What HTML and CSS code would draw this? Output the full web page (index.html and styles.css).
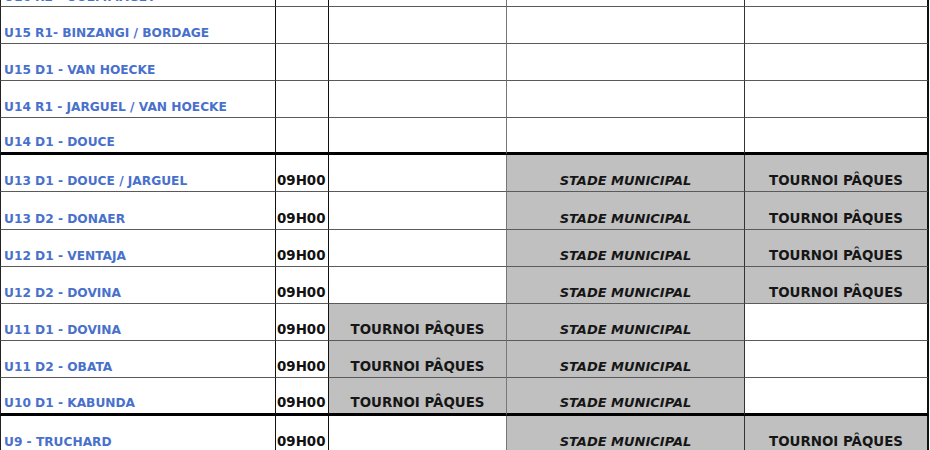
FILE: index.html
```html
<!DOCTYPE html>
<html lang="fr">
<head>
<meta charset="utf-8">
<title>Planning</title>
<link rel="stylesheet" href="styles.css">
</head>
<body>
<div class="viewport">
  <div class="sheet">
    <div class="row r0">
      <div class="c team">U16 R2 - OUEMMAGEY</div><div class="c time"></div><div class="c col3"></div><div class="c col4"></div><div class="c col5"></div>
    </div>
    <div class="row h37">
      <div class="c team">U15 R1- BINZANGI / BORDAGE</div><div class="c time"></div><div class="c col3"></div><div class="c col4"></div><div class="c col5"></div>
    </div>
    <div class="row h37">
      <div class="c team">U15 D1 - VAN HOECKE</div><div class="c time"></div><div class="c col3"></div><div class="c col4"></div><div class="c col5"></div>
    </div>
    <div class="row h37">
      <div class="c team">U14 R1 - JARGUEL / VAN HOECKE</div><div class="c time"></div><div class="c col3"></div><div class="c col4"></div><div class="c col5"></div>
    </div>
    <div class="row h37 thick">
      <div class="c team">U14 D1 - DOUCE</div><div class="c time"></div><div class="c col3"></div><div class="c col4"></div><div class="c col5"></div>
    </div>
    <div class="row h37">
      <div class="c team">U13 D1 - DOUCE / JARGUEL</div><div class="c time">09H00</div><div class="c col3"></div><div class="c col4 grey venue">STADE MUNICIPAL</div><div class="c col5 grey event">TOURNOI PÂQUES</div>
    </div>
    <div class="row h38">
      <div class="c team">U13 D2 - DONAER</div><div class="c time">09H00</div><div class="c col3"></div><div class="c col4 grey venue">STADE MUNICIPAL</div><div class="c col5 grey event">TOURNOI PÂQUES</div>
    </div>
    <div class="row h37">
      <div class="c team">U12 D1 - VENTAJA</div><div class="c time">09H00</div><div class="c col3"></div><div class="c col4 grey venue">STADE MUNICIPAL</div><div class="c col5 grey event">TOURNOI PÂQUES</div>
    </div>
    <div class="row h37">
      <div class="c team">U12 D2 - DOVINA</div><div class="c time">09H00</div><div class="c col3"></div><div class="c col4 grey venue">STADE MUNICIPAL</div><div class="c col5 grey event">TOURNOI PÂQUES</div>
    </div>
    <div class="row h37">
      <div class="c team">U11 D1 - DOVINA</div><div class="c time">09H00</div><div class="c col3 grey event">TOURNOI PÂQUES</div><div class="c col4 grey venue">STADE MUNICIPAL</div><div class="c col5"></div>
    </div>
    <div class="row h37">
      <div class="c team">U11 D2 - OBATA</div><div class="c time">09H00</div><div class="c col3 grey event">TOURNOI PÂQUES</div><div class="c col4 grey venue">STADE MUNICIPAL</div><div class="c col5"></div>
    </div>
    <div class="row h38 thick">
      <div class="c team">U10 D1 - KABUNDA</div><div class="c time">09H00</div><div class="c col3 grey event">TOURNOI PÂQUES</div><div class="c col4 grey venue">STADE MUNICIPAL</div><div class="c col5"></div>
    </div>
    <div class="row h37">
      <div class="c team">U9 - TRUCHARD</div><div class="c time">09H00</div><div class="c col3"></div><div class="c col4 grey venue">STADE MUNICIPAL</div><div class="c col5 grey event">TOURNOI PÂQUES</div>
    </div>
  </div>
</div>
</body>
</html>
```
FILE: styles.css
```css
* { box-sizing: border-box; }

html, body {
  margin: 0;
  padding: 0;
  background: #ffffff;
}

.viewport {
  width: 930px;
  height: 450px;
  overflow: hidden;
  background: #ffffff;
}

.sheet {
  margin-top: -31px;
  width: 929px;
  font-family: "DejaVu Sans", "Liberation Sans", sans-serif;
  font-weight: bold;
  color: #161616;
}

.row {
  display: grid;
  grid-template-columns: 276px 53px 178px 238px 184px;
}

.r0 { height: 38px; }
.h37 { height: 37px; }
.h38 { height: 38px; }

.c {
  display: flex;
  align-items: flex-end;
  border-bottom: 1px solid #5a5a5a;
  border-right: 1px solid #111;
  padding-bottom: 2px;
  line-height: 16px;
  font-size: 13.4px;
  white-space: nowrap;
  overflow: visible;
}

.r0 .c { padding-bottom: 1px; }

.thick .c { border-bottom: 3px solid #000; }

.team {
  border-left: 1px solid #222;
  padding-left: 3px;
  font-size: 12.2px;
  color: #4870cc;
}

.time {
  padding-left: 1px;
  color: #111;
}

.col3 { border-right-color: #777; justify-content: center; }
.col4 { border-right-color: #333; justify-content: center; }
.col5 { border-right: 2px solid #111; justify-content: center; }

.grey { background: #c0c0c0; }

.venue { font-style: italic; font-size: 13px; }
.event { font-size: 13.4px; }
```
